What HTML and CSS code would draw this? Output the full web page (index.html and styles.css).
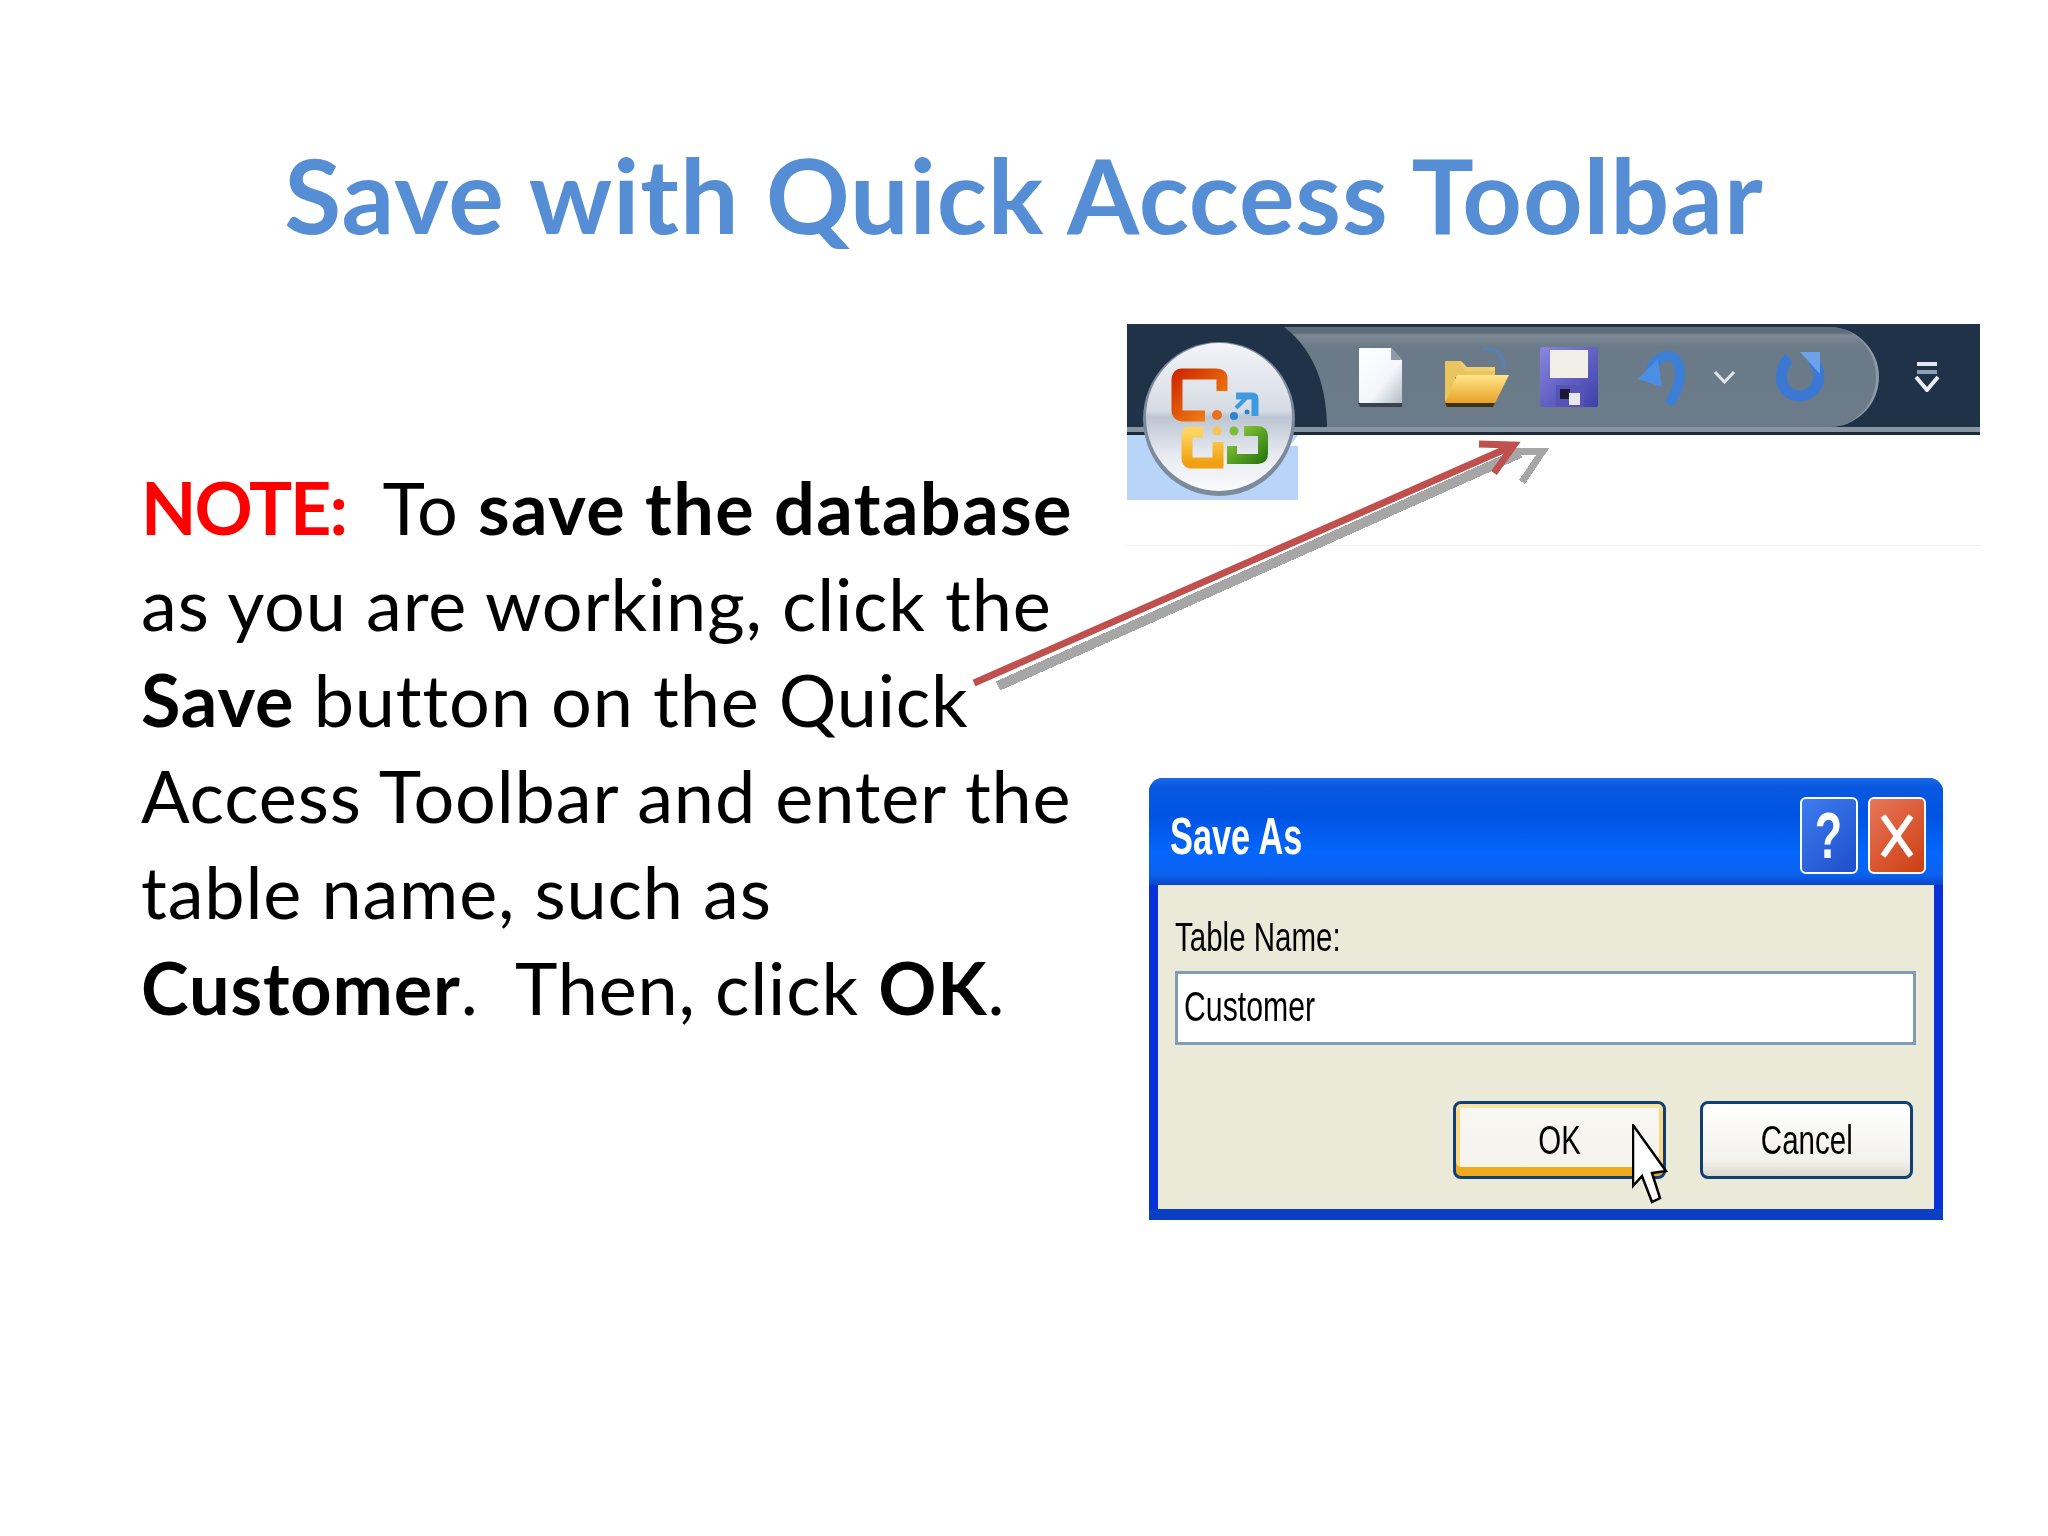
FILE: index.html
```html
<!DOCTYPE html>
<html lang="en">
<head>
    <meta charset="UTF-8">
    <meta name="viewport" content="width=device-width, initial-scale=1.0">
    <title>Save with Quick Access Toolbar</title>
    <link rel="stylesheet" href="styles.css">
</head>
<body>
    <div class="slide">
        <h1 class="slide-title">Save with Quick Access Toolbar</h1>

        <div class="slide-body">
            <p class="note">
                <span class="note-label">NOTE:</span>&nbsp; To <b class="wide">save the database</b><br>
                as you are working, click the<br>
                <b>Save</b> button on the Quick<br>
                Access Toolbar and enter the<br>
                table name, such as<br>
                <b>Customer</b>.&nbsp; Then, click <b>OK</b>.
            </p>

            <div class="shots">
                <div class="ribbon">
                    <div class="ribbon-bar">
                        <div class="qat">
                            <svg class="icon-new" width="46" height="60" viewBox="0 0 46 60">
                                <defs>
                                    <linearGradient id="pageFill" x1="0" y1="0" x2="1" y2="1">
                                        <stop offset="0" stop-color="#ffffff"/>
                                        <stop offset="0.6" stop-color="#f4f6fa"/>
                                        <stop offset="1" stop-color="#b4bcc8"/>
                                    </linearGradient>
                                </defs>
                                <path d="M2 1H34L45 13V56H2Z" fill="url(#pageFill)"/>
                                <path d="M34 1V13H45Z" fill="#8d99a6"/>
                                <path d="M1 56H45V60H3Z" fill="#39434e"/>
                            </svg>
                            <svg class="icon-open" width="66" height="60" viewBox="0 0 66 60">
                                <defs>
                                    <linearGradient id="folderFront" x1="0" y1="0" x2="0" y2="1">
                                        <stop offset="0" stop-color="#ffe68a"/>
                                        <stop offset="1" stop-color="#e8a226"/>
                                    </linearGradient>
                                </defs>
                                <path d="M40 2C52 0 62 8 60 22" fill="none" stroke="#5d7fae" stroke-width="4"/>
                                <path d="M2 14H18L24 20H52V30H2Z" fill="#f0cf6c"/>
                                <path d="M2 14V54L12 54V30H52V24H22L16 14Z" fill="#e9c560"/>
                                <path d="M14 28H66L52 56H2Z" fill="url(#folderFront)"/>
                                <path d="M2 56H52L50 60H4Z" fill="#3c3410"/>
                            </svg>
                            <svg class="icon-save" width="58" height="60" viewBox="0 0 58 60">
                                <defs>
                                    <linearGradient id="diskFill" x1="0" y1="0" x2="1" y2="1">
                                        <stop offset="0" stop-color="#8a86e0"/>
                                        <stop offset="1" stop-color="#3c3fa8"/>
                                    </linearGradient>
                                </defs>
                                <rect width="58" height="60" rx="2" fill="url(#diskFill)"/>
                                <path d="M10 3H48V31H10Z" fill="#f2efe6"/>
                                <path d="M16 38H44V60H16Z" fill="#5652b8"/>
                                <rect x="20" y="42" width="10" height="10" fill="#1a1a30"/>
                                <rect x="29" y="46" width="11" height="12" fill="#e8e8ee"/>
                            </svg>
                            <svg class="icon-undo" width="49" height="57" viewBox="0 0 49 57">
                                <path d="M12 22C18 8 30 3 37 10C46 20 42 38 31 55" fill="none" stroke="#3c7fd6" stroke-width="10"/>
                                <path d="M0 30L20 10L24 38Z" fill="#4a8fe4"/>
                            </svg>
                            <svg class="icon-more" width="23" height="14" viewBox="0 0 23 14">
                                <path d="M2 2L11.500 12L21 2" fill="none" stroke="#dfe6ee" stroke-width="3"/>
                            </svg>
                            <svg class="icon-redo" width="49" height="50" viewBox="0 0 49 50">
                                <path d="M36 8C46 18 46 36 30 43C14 47 3 36 6 20C7 14 9 10 13 6" fill="none" stroke="#3b78d4" stroke-width="11"/>
                                <path d="M24 0H44V22Z" fill="#6ca3e8"/>
                            </svg>
                        </div>
                        <svg class="icon-customize" width="26" height="30" viewBox="0 0 26 30">
                            <rect x="3" y="0" width="20" height="4" fill="#e2e8ef"/>
                            <rect x="3" y="8" width="20" height="4" fill="#8ba0b6"/>
                            <path d="M2 15L13 28L24 15" fill="none" stroke="#e8edf3" stroke-width="4"/>
                        </svg>
                    </div>
                    <div class="ribbon-tab"></div>
                    <svg class="office-button" width="200" height="176" viewBox="1127 324 200 176">
                        <defs>
                            <linearGradient id="orbFill" x1="0" y1="0" x2="0" y2="1">
                                <stop offset="0" stop-color="#f2f4f8"/>
                                <stop offset="0.46" stop-color="#d6dbe3"/>
                                <stop offset="0.5" stop-color="#bcc5d2"/>
                                <stop offset="0.75" stop-color="#e6eaf0"/>
                                <stop offset="1" stop-color="#fafbfc"/>
                            </linearGradient>
                            <linearGradient id="redRing" x1="0" y1="0" x2="1" y2="1">
                                <stop offset="0" stop-color="#d02c00"/>
                                <stop offset="1" stop-color="#f58a14"/>
                            </linearGradient>
                            <linearGradient id="yellowRing" x1="0" y1="0" x2="0" y2="1">
                                <stop offset="0" stop-color="#ffd560"/>
                                <stop offset="1" stop-color="#f0a010"/>
                            </linearGradient>
                            <linearGradient id="greenRing" x1="0" y1="0" x2="1" y2="1">
                                <stop offset="0" stop-color="#8cc83c"/>
                                <stop offset="1" stop-color="#2f7d12"/>
                            </linearGradient>
                        </defs>
                        <path d="M1280 324Q1326 356 1327 427H1200V324Z" fill="#1f3247"/>
                        <path d="M1298 435L1290 446L1298 446Z" fill="#fff"/>
                        <ellipse cx="1219" cy="419" rx="76" ry="77" fill="#7d8a9c"/>
                        <ellipse cx="1219" cy="417" rx="73" ry="74" fill="url(#orbFill)"/>
                        <path d="M1222 391V378Q1222 374 1216 374H1182Q1177 374 1177 380V410Q1177 416 1184 416H1205" fill="none" stroke="url(#redRing)" stroke-width="11"/>
                        <circle cx="1217" cy="415" r="5" fill="#e8701e"/>
                        <path d="M1236 396H1252Q1255 396 1255 399V416" fill="none" stroke="#3f9be0" stroke-width="7"/>
                        <path d="M1236 408L1246 398" stroke="#3f9be0" stroke-width="4"/>
                        <circle cx="1234" cy="416" r="4" fill="#2c82d4"/>
                        <circle cx="1247" cy="412" r="2.500" fill="#2c82d4"/>
                        <path d="M1203 432H1190Q1187 432 1187 436V458Q1187 463 1192 463H1218V442" fill="none" stroke="url(#yellowRing)" stroke-width="11"/>
                        <circle cx="1217" cy="431" r="4.500" fill="#f6c450"/>
                        <path d="M1244 431H1258Q1263 431 1263 436V454Q1263 459 1258 459H1232V446" fill="none" stroke="url(#greenRing)" stroke-width="10"/>
                        <circle cx="1234" cy="431" r="4.500" fill="#7ebc34"/>
                    </svg>
                </div>

                <div class="dialog">
                    <div class="dialog-titlebar">
                        <span class="dialog-title">Save As</span>
                        <span class="title-btn title-btn-help"><span class="help-glyph">?</span></span>
                        <span class="title-btn title-btn-close">
                            <svg width="34" height="44" viewBox="0 0 34 44">
                                <path d="M3 2L31 42M31 2L3 42" stroke="#fff" stroke-width="6"/>
                            </svg>
                        </span>
                    </div>
                    <div class="dialog-client">
                        <label class="field-label"><span class="xp-text">Table Name:</span></label>
                        <div class="field-input"><span class="xp-text">Customer</span></div>
                        <div class="dialog-buttons">
                            <div class="xp-btn xp-btn-default"><span class="xp-text">OK</span></div>
                            <div class="xp-btn"><span class="xp-text">Cancel</span></div>
                        </div>
                    </div>
                    <svg class="mouse-cursor" width="36" height="80" viewBox="0 0 36 80">
                        <path d="M1 1V62L10 52L20 78L28 74L20 49L34 47Z" fill="#fff" stroke="#000" stroke-width="2.500"/>
                    </svg>
                </div>
            </div>
        </div>

        <svg class="callout-arrow" width="2048" height="1536" viewBox="0 0 2048 1536">
            <g fill="none" stroke="#a6a6a6" shape-rendering="crispEdges">
                <path d="M998 686L1520 453" stroke-width="10"/>
                <path d="M1508 451H1543L1522 482" stroke-width="7"/>
            </g>
            <g fill="none" stroke="#c0504d">
                <path d="M974 683L1510 447" stroke-width="7"/>
                <path d="M1479 444L1514 445L1494 473" stroke-width="7"/>
            </g>
        </svg>
    </div>
</body>
</html>
```

FILE: styles.css
```css
body {
    margin: 0;
    background-color: #fff;
    font-family: "Lato", "Open Sans", sans-serif;
}

.slide {
    position: relative;
    width: 2048px;
    height: 1536px;
    overflow: hidden;
    padding-top: 130px;
    box-sizing: border-box;
}

.slide-title {
    margin: 0;
    font-size: 104px;
    font-weight: 700;
    letter-spacing: 0.9px;
    line-height: 127px;
    color: #558ed5;
    text-align: center;
}

.slide-body {
    display: flex;
    margin-top: 67px;
}

.note {
    width: 986px;
    margin: 135px 0 0;
    padding-left: 141px;
    font-size: 72px;
    letter-spacing: 0.85px;
    line-height: 96px;
    color: #000;
    white-space: nowrap;
}

.note .wide {
    letter-spacing: 1.4px;
}

.note-label {
    font-weight: 700;
    letter-spacing: -2px;
    color: #f00;
}

.shots {
    width: 853px;
}

/* ribbon screenshot */
.ribbon {
    position: relative;
    height: 221px;
    border-bottom: 1px solid #eeeeee;
    filter: blur(0.7px);
}

.ribbon-bar {
    display: flex;
    justify-content: space-between;
    box-sizing: border-box;
    height: 111px;
    padding-top: 3px;
    padding-left: 155px;
    padding-right: 40px;
    background-color: #1f3247;
    border-bottom: 3px solid #1a2a3a;
    box-shadow: inset 0 -5px 0 #8794a1;
}

.qat {
    display: flex;
    align-items: center;
    width: 597px;
    height: 100px;
    box-sizing: border-box;
    padding-left: 75px;
    background: linear-gradient(#5f6d7a 0, #5f6d7a 6%, #7d8995 8%, #6b7a88 20%, #6c7b89 100%);
    border-right: 3px solid #8c99a6;
    border-radius: 0 60px 60px 0;
}

.icon-open { margin-left: 40px; }
.icon-save { margin-left: 31px; }
.icon-undo { margin-left: 40px; }
.icon-more { margin-left: 26px; }
.icon-redo { margin-left: 40px; }

.icon-customize {
    margin-top: 35px;
}

.ribbon-tab {
    width: 171px;
    height: 65px;
    background-color: #b8d4f8;
}

.office-button {
    position: absolute;
    left: 0;
    top: 0;
}

/* Save As dialog */
.dialog {
    position: relative;
    width: 794px;
    height: 442px;
    margin-top: 232px;
    margin-left: 22px;
    display: flex;
    flex-direction: column;
    box-sizing: border-box;
    border-radius: 14px 14px 0 0;
    border-bottom: 11px solid #0a3fc4;
    background-color: #0831d9;
    filter: blur(0.6px);
    font-family: "Liberation Sans", sans-serif;
}

.dialog-titlebar {
    display: flex;
    align-items: center;
    flex-shrink: 0;
    gap: 10px;
    box-sizing: border-box;
    height: 107px;
    padding: 8px 17px 0 21px;
    border-radius: 14px 14px 0 0;
    background: linear-gradient(#1a6ae8 0, #0a58e0 8%, #0054e3 35%, #0466fc 70%, #0a62f0 90%, #0a46c8 100%);
}

.dialog-title {
    flex: 1;
    font-size: 52px;
    font-weight: 700;
    line-height: 60px;
    color: #fff;
    transform: scaleX(0.66);
    transform-origin: left center;
}

.title-btn {
    display: flex;
    align-items: center;
    justify-content: center;
    box-sizing: border-box;
    width: 58px;
    height: 77px;
    border: 2px solid #fff;
    border-radius: 6px;
    color: #fff;
}

.title-btn-help {
    background: linear-gradient(135deg, #3d7cf0, #1f4ecb);
    font-size: 64px;
    font-weight: 700;
}

.help-glyph {
    display: inline-block;
    transform: scaleX(0.7);
}

.title-btn-close {
    background: linear-gradient(135deg, #e8765a, #cc3e12);
}

.dialog-client {
    flex: 1;
    margin: 0 9px;
    padding: 30px 0 0 17px;
    background-color: #ebe9d8;
}

.xp-text {
    display: inline-block;
    transform: scaleX(0.72);
    color: #000;
}

.field-label {
    display: block;
    height: 44px;
    margin-bottom: 12px;
    font-size: 41px;
    line-height: 44px;
}

.field-label .xp-text,
.field-input .xp-text {
    transform-origin: left center;
}

.field-input {
    box-sizing: border-box;
    width: 741px;
    height: 74px;
    padding-left: 6px;
    border: 3px solid #7f9db9;
    background-color: #fff;
    font-size: 42px;
    line-height: 66px;
}

.dialog-buttons {
    display: flex;
    justify-content: flex-end;
    gap: 34px;
    margin-top: 56px;
    padding-right: 21px;
}

.xp-btn {
    display: flex;
    align-items: center;
    justify-content: center;
    box-sizing: border-box;
    width: 213px;
    height: 78px;
    border: 3px solid #0f3f73;
    border-radius: 8px;
    background: linear-gradient(#ffffff, #f2f1ea 80%, #dcd8cc);
    font-size: 41px;
}

.xp-btn-default {
    background: linear-gradient(#f8f7f2, #f3f2ec);
    box-shadow: inset 0 -9px 0 #eeaa1c, inset 0 4px 0 #fde0a0, inset 4px 0 0 #fcd585, inset -4px 0 0 #fcd585;
}

.mouse-cursor {
    position: absolute;
    left: 483px;
    top: 346px;
}

.callout-arrow {
    position: absolute;
    left: 0;
    top: 0;
    pointer-events: none;
}
```
